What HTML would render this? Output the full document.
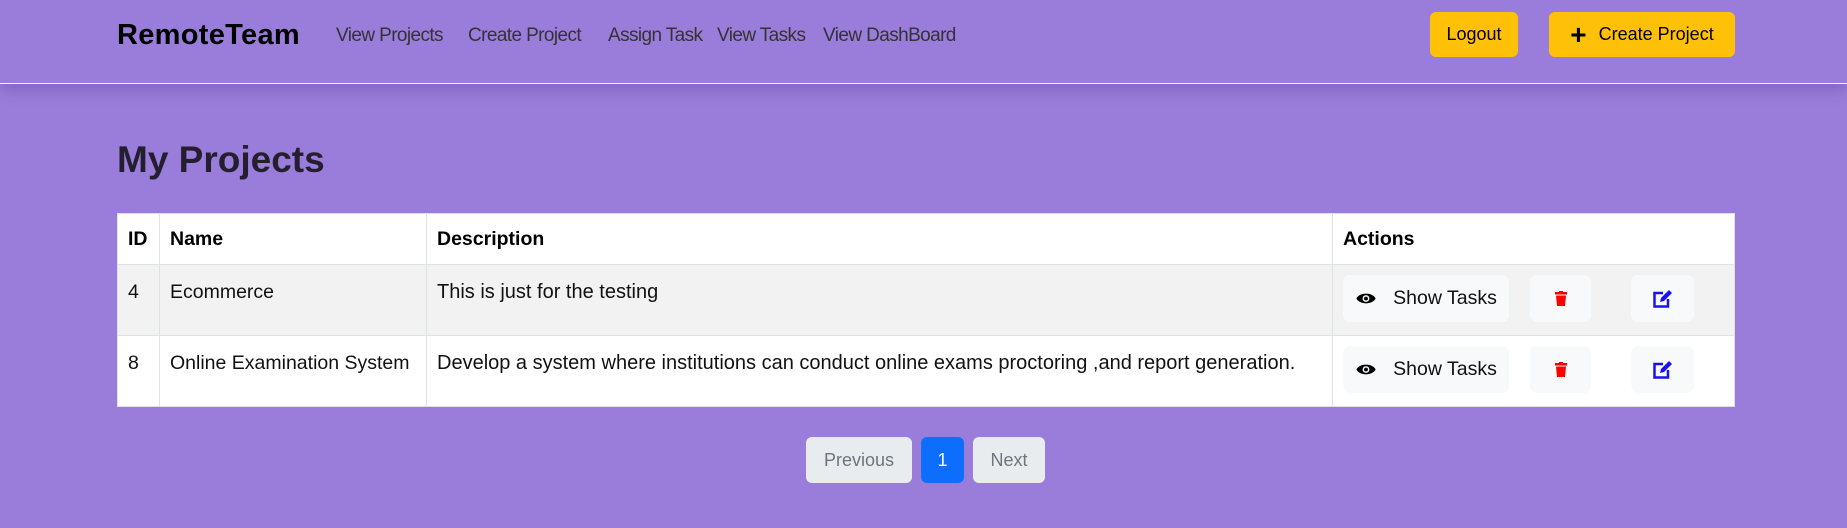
<!DOCTYPE html>
<html><head><meta charset="utf-8"><style>
*{box-sizing:border-box;margin:0;padding:0}
body{width:1847px;height:528px;background:#9a7ddb;font-family:"Liberation Sans",sans-serif;position:relative;overflow:hidden;color:#111}
.nav{position:absolute;left:0;top:0;width:1847px;height:84px;border-bottom:1px solid #f2eefc;box-shadow:0 6px 14px rgba(60,30,120,0.25)}
.brand{position:absolute;left:117px;top:19px;font-size:29px;font-weight:bold;color:#000;letter-spacing:0.3px}
.link{position:absolute;top:25px;font-size:19px;color:#333;letter-spacing:-0.6px}
.btn{position:absolute;background:#ffc107;border-radius:6px;font-size:18px;color:#000;display:flex;align-items:center;justify-content:center}
h1{position:absolute;left:117px;top:139px;font-size:37px;color:#231f2e;font-weight:bold}
table{position:absolute;left:117px;top:213px;width:1618px;border-collapse:collapse;background:#fff;font-size:19.5px}
td,th{border:1px solid #dee2e6;text-align:left;vertical-align:top;padding:0 10px}
td.d{font-size:20px}
th{height:51px;vertical-align:middle;font-weight:bold;color:#000}
tr.r td{height:71px;padding-top:16px;position:relative}
tr.g td{background:#f2f2f2}
.ab{position:absolute;background:#f8f9fa;border-radius:7px;display:flex;align-items:center;justify-content:center;font-size:19.5px}
.pg{position:absolute;top:437px;height:46px;border-radius:6px;display:flex;align-items:center;justify-content:center;font-size:18px}
</style></head><body>
<div class="nav">
<div class="brand">RemoteTeam</div>
<div class="link" style="left:336px">View Projects</div>
<div class="link" style="left:468px">Create Project</div>
<div class="link" style="left:608px">Assign Task</div>
<div class="link" style="left:717px">View Tasks</div>
<div class="link" style="left:823px">View DashBoard</div>
<div class="btn" style="left:1430px;top:12px;width:88px;height:45px">Logout</div>
<div class="btn" style="left:1549px;top:12px;width:186px;height:45px"><span style="font-size:28px;font-weight:bold;margin-right:12px;line-height:1">+</span>Create Project</div>
</div>
<h1>My Projects</h1>
<table>
<tr><th style="width:42px">ID</th><th style="width:267px">Name</th><th style="width:906px">Description</th><th>Actions</th></tr>
<tr class="r g"><td>4</td><td>Ecommerce</td><td class="d">This is just for the testing</td><td></td></tr>
<tr class="r"><td>8</td><td>Online Examination System</td><td class="d">Develop a system where institutions can conduct online exams proctoring ,and report generation.</td><td></td></tr>
</table>
<div class="ab" style="left:1343px;top:275px;width:166px;height:47px"><svg width="22" height="15" viewBox="0 0 20 14" style="margin-right:16px"><path d="M1 7C4 1 16 1 19 7C16 13 4 13 1 7Z" fill="#000"/><circle cx="10" cy="7" r="3.2" fill="#f8f9fa"/><circle cx="10" cy="7" r="1.8" fill="#000"/></svg>Show Tasks</div>
<div class="ab" style="left:1530px;top:275px;width:61px;height:47px"><svg width="12" height="15" viewBox="0 0 12 15"><rect x="0" y="1" width="12" height="2.5" fill="red"/><rect x="4" y="0" width="4" height="2" fill="red"/><path d="M1 4.5H11L10 15H2Z" fill="red"/></svg></div>
<div class="ab" style="left:1631px;top:275px;width:63px;height:47px"><svg width="20" height="18" viewBox="0 0 20 18"><path d="M10 3H1.5V16.5H15V9" fill="none" stroke="#1a10f0" stroke-width="2.5"/><path d="M7 12L8 8L16 0L19 3L11 11Z" fill="#1a10f0"/></svg></div>
<div class="ab" style="left:1343px;top:346px;width:166px;height:47px"><svg width="22" height="15" viewBox="0 0 20 14" style="margin-right:16px"><path d="M1 7C4 1 16 1 19 7C16 13 4 13 1 7Z" fill="#000"/><circle cx="10" cy="7" r="3.2" fill="#f8f9fa"/><circle cx="10" cy="7" r="1.8" fill="#000"/></svg>Show Tasks</div>
<div class="ab" style="left:1530px;top:346px;width:61px;height:47px"><svg width="12" height="15" viewBox="0 0 12 15"><rect x="0" y="1" width="12" height="2.5" fill="red"/><rect x="4" y="0" width="4" height="2" fill="red"/><path d="M1 4.5H11L10 15H2Z" fill="red"/></svg></div>
<div class="ab" style="left:1631px;top:346px;width:63px;height:47px"><svg width="20" height="18" viewBox="0 0 20 18"><path d="M10 3H1.5V16.5H15V9" fill="none" stroke="#1a10f0" stroke-width="2.5"/><path d="M7 12L8 8L16 0L19 3L11 11Z" fill="#1a10f0"/></svg></div>
<div class="pg" style="left:806px;width:106px;background:#e9ecef;color:#6c757d">Previous</div>
<div class="pg" style="left:921px;width:43px;background:#0d6efd;color:#fff">1</div>
<div class="pg" style="left:973px;width:72px;background:#e9ecef;color:#6c757d">Next</div>
</body></html>
